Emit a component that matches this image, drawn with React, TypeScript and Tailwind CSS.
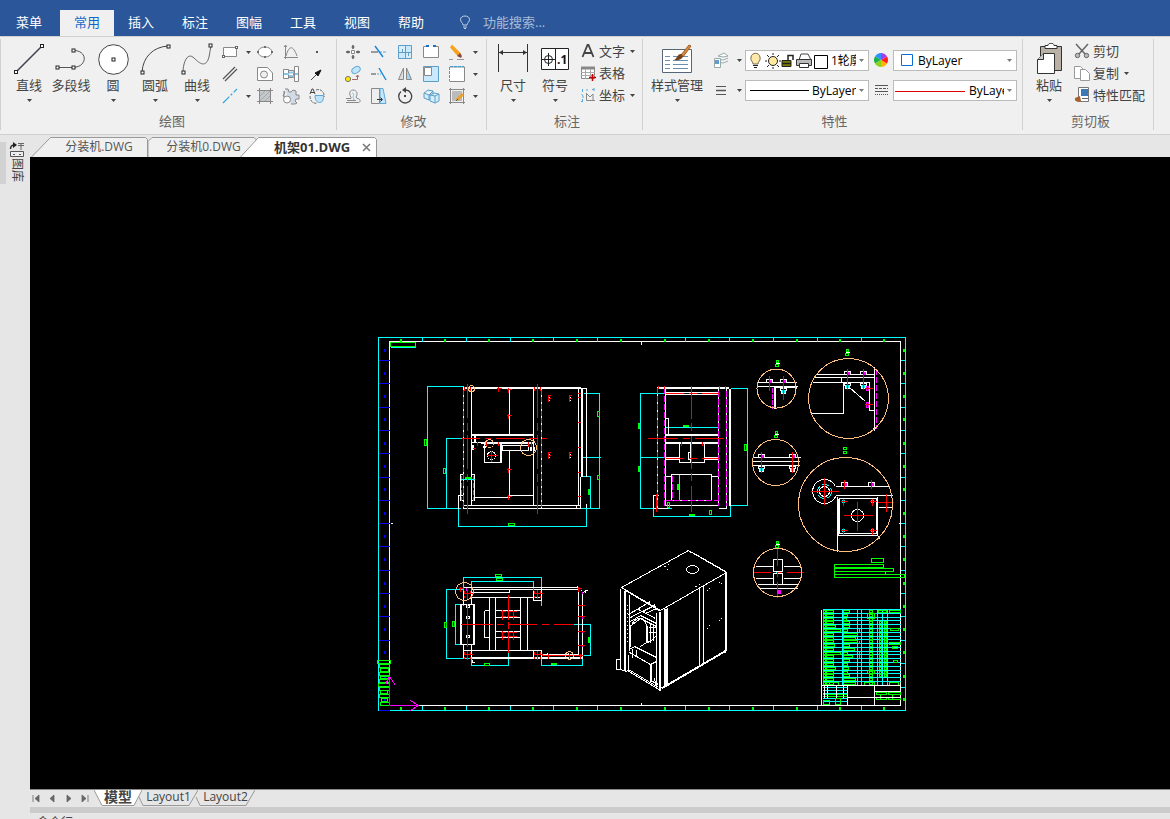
import { useState, type ReactNode } from "react";

const MENUS = ["菜单", "常用", "插入", "标注", "图幅", "工具", "视图", "帮助"];

const WHITE = "#ffffff";
const CYAN = "#00ffff";
const GREEN = "#00ff00";
const RED = "#ff0000";
const MAGENTA = "#ff00ff";
const BLUE = "#0000ff";
const ORANGE = "#ffbf7f";

function Arrow({ className = "" }: { className?: string }) {
  return (
    <svg width="5" height="3" viewBox="0 0 5 3" className={className} aria-hidden="true">
      <path d="M0 0h5L2.5 3z" fill="#444" />
    </svg>
  );
}

function Group({ label, className, children }: { label: string; className: string; children: ReactNode }) {
  return (
    <section className={`mt-0.5 mb-1 flex flex-none flex-col border-r border-[#d0d0d0] pt-0.5 ${className}`}>
      <div className="flex h-[66px]">{children}</div>
      <h2 className="mt-[5px] text-center text-[13px] leading-[18px] text-[#666]">{label}</h2>
    </section>
  );
}

function BigButton({ label, arrow = true, wide = false, children }: { label: string; arrow?: boolean; wide?: boolean; children: ReactNode }) {
  return (
    <button className={`flex flex-col items-center ${wide ? "w-[60px]" : "w-[42px]"}`}>
      <span className="flex h-9 items-center justify-center">{children}</span>
      <span className="text-[13px] leading-4 whitespace-nowrap">{label}</span>
      {arrow && <Arrow className="mt-[6px]" />}
    </button>
  );
}

function IconButton({ label, arrow = false, children }: { label: string; arrow?: boolean; children: ReactNode }) {
  return (
    <button aria-label={label} className={`flex h-[22px] items-center ${arrow ? "w-[35px]" : "w-[26px]"}`}>
      <svg width="18" height="18" viewBox="0 0 18 18" fill="none" stroke="#888" className="mx-[3px] flex-none">
        {children}
      </svg>
      {arrow && <Arrow className="ml-1 flex-none" />}
    </button>
  );
}

function TextButton({ label, arrow = false, children }: { label: string; arrow?: boolean; children: ReactNode }) {
  return (
    <button className="flex h-[22px] items-center pb-0.5 text-[13px] leading-[18px] whitespace-nowrap">
      <svg width="16" height="16" viewBox="0 0 16 16" fill="none" stroke="#666" className="mr-[3px] flex-none">
        {children}
      </svg>
      {label}
      {arrow && <Arrow className="ml-[5px]" />}
    </button>
  );
}

function Handle({ x, y, color = "#222" }: { x: number; y: number; color?: string }) {
  return <rect x={x - 1.5} y={y - 1.5} width="3" height="3" fill="#fff" stroke={color} />;
}

function DrawGroup() {
  return (
    <Group label="绘图" className="w-[337px] border-l pl-[7px]">
      <BigButton label="直线">
        <svg width="32" height="32" viewBox="0 0 32 32" fill="none" stroke="#445" strokeWidth="1.6">
          <path d="M3 29L29 3" />
          <g strokeWidth="1"><Handle x={3} y={29} /><Handle x={29} y={3} /></g>
        </svg>
      </BigButton>
      <BigButton label="多段线" arrow={false}>
        <svg width="32" height="32" viewBox="0 0 32 32" fill="none" stroke="#555">
          <path d="M2 24.5H18C33 24 33 7 18 7.5" />
          <Handle x={2.5} y={24.5} /><Handle x={18.5} y={24.5} /><Handle x={18.5} y={7.5} />
        </svg>
      </BigButton>
      <BigButton label="圆">
        <svg width="32" height="32" viewBox="0 0 32 32" fill="#fff" stroke="#444">
          <circle cx="16.5" cy="16.5" r="14.8" />
          <Handle x={16.5} y={16.5} />
        </svg>
      </BigButton>
      <BigButton label="圆弧">
        <svg width="32" height="32" viewBox="0 0 32 32" fill="none" stroke="#444">
          <path d="M3 29C4 14 14 4 29 3" />
          <Handle x={3.5} y={29.5} /><Handle x={29.5} y={3.5} />
        </svg>
      </BigButton>
      <BigButton label="曲线">
        <svg width="32" height="32" viewBox="0 0 32 32" fill="none" stroke="#666">
          <path d="M2 30C2 18 7 9 13 15S25 25 28 14Q29 9 30 2" />
          <Handle x={2.5} y={29.5} /><Handle x={29.5} y={2.5} />
        </svg>
      </BigButton>
      <div>
        <IconButton label="矩形" arrow>
          <path d="M2.5 4.5h13v9h-13z" fill="#fff" />
          <rect x="1.5" y="12.5" width="2" height="2" fill="#fff" stroke="#666" />
          <rect x="14.5" y="3.5" width="2" height="2" fill="#fff" stroke="#666" />
        </IconButton>
        <IconButton label="平行线">
          <path d="M2 14L14 2M4 16L16 4" stroke="#555" strokeWidth="1.2" />
        </IconButton>
        <IconButton label="中心线" arrow>
          <path d="M2 16L16 2" stroke="#35a7e0" strokeWidth="1.3" strokeDasharray="9 2 2 2" />
        </IconButton>
      </div>
      <div>
        <IconButton label="椭圆">
          <ellipse cx="9" cy="9" rx="7" ry="5" fill="#fff" />
          <path d="M8 4h2M8 14h2M1 9h2M15 9h2" stroke="#555" strokeWidth="1.6" />
        </IconButton>
        <IconButton label="轮廓">
          <path d="M1.5 2.5h10l5 5.5v7.5h-15z" fill="#fff" />
          <circle cx="8" cy="9.5" r="3.5" fill="#eee" />
        </IconButton>
        <IconButton label="填充">
          <path d="M3 3h12v12H3z" fill="#c3c8cb" stroke="none" />
          <path d="M1 3.5h16M1 14.5h16M3.5 1v16M14.5 1v16" stroke="#888" />
          <path d="M4 14L14 4M4 9l5-5M9 14l5-5" stroke="#a5a9ac" />
        </IconButton>
      </div>
      <div>
        <IconButton label="公式曲线">
          <path d="M3.5 2v14M2 14.5h14M2 4l1.5-2L5 4M4 13C7 2 11 2 15 13" />
        </IconButton>
        <IconButton label="孔轴">
          <path d="M1.5 4.5h5v9h-5zM6.5 5.5h5v7h-5zM12.5 1.5h4v15h-4z" fill="#fff" />
          <path d="M2 9h5M7 7.5h5M7 11h5M13 9h3" stroke="#8cc4e8" strokeWidth="2" />
        </IconButton>
        <IconButton label="齿轮">
          <path d="M3 2h3l1 3 2 0 2-2 3 1v3l0 1h3v4h-3l-1 2 2 2-2 1h-4M2 10l-1-2 2-2-1-2z" fill="#d3dbe6" />
          <circle cx="5" cy="12.5" r="3.5" fill="#fff" />
        </IconButton>
      </div>
      <div>
        <IconButton label="点">
          <path d="M8 9h2" stroke="#555" strokeWidth="2" />
        </IconButton>
        <IconButton label="箭头">
          <path d="M3 15L9 9" stroke="#444" />
          <path d="M13 5L7 8l3 3z" fill="#111" stroke="#111" />
        </IconButton>
        <IconButton label="局部放大">
          <path d="M8 3c5-2 9 3 8 7M2 9c0 5 3 8 7 7" strokeDasharray="3 1" stroke="#666" />
          <path d="M7 8.5h8.5c0 5-1 7-4 7s-4.500-3-4.500-7z" fill="#bfe3fa" stroke="#5ba6d3" />
          <path d="M2 7l2-5h1l2 5M3 5.500h3" stroke="#444" />
        </IconButton>
      </div>
    </Group>
  );
}

function ModifyGroup() {
  return (
    <Group label="修改" className="w-[150px] pl-1">
      <div>
        <IconButton label="平移">
          <path d="M9 2v4M9 12v4M2 9h4M12 9h4" stroke="#555" strokeWidth="1.4" />
          <path d="M7.500 4h3M7.500 14h3M4 7.500v3M14 7.500v3" stroke="#555" />
          <path d="M7.5 7.5h3v3h-3z" fill="#fff" />
        </IconButton>
        <IconButton label="平移复制">
          <ellipse cx="12" cy="5" rx="4.500" ry="3" transform="rotate(-30 12 5)" fill="#bfe6fb" stroke="#63a8d3" />
          <circle cx="4" cy="14" r="2.600" fill="#ffe800" stroke="#777" />
          <path d="M8 14.500h5.500v-4M12 12l1.500-2 1.500 2" stroke="#a66" />
        </IconButton>
        <IconButton label="等距线">
          <path d="M2 11.500h5v-1C4 5 7 3 9 3s6 2 3 7l1 1.500c4 0 4 4 1 4H2M3 13.500h9" />
          <path d="M8 6c3 0 1 3 1 4l1 3" stroke="#8cc0e0" />
        </IconButton>
      </div>
      <div>
        <IconButton label="裁剪">
          <path d="M1 9h7" stroke="#777" strokeWidth="1.400" />
          <path d="M9 9h8" stroke="#58a9e0" strokeDasharray="3 1" />
          <path d="M5 3l8 11" stroke="#1687d9" strokeWidth="1.400" />
        </IconButton>
        <IconButton label="延伸">
          <path d="M1 9h5" stroke="#777" strokeWidth="1.400" />
          <path d="M7 9h4" stroke="#58a9e0" strokeDasharray="2 1" />
          <path d="M9 3l7 12" stroke="#1687d9" strokeWidth="1.400" />
        </IconButton>
        <IconButton label="拉伸">
          <path d="M10 1.500h3l3 15h-6z" fill="#c3e7fb" stroke="#63a8d3" />
          <path d="M1.500 1.500h8v15h-8z" fill="#eee" />
          <path d="M7 12.500h5M10.500 10.500l2 2-2 2" stroke="#333" />
        </IconButton>
      </div>
      <div>
        <IconButton label="阵列">
          <path d="M2.500 2.500h13v13h-13z" fill="#c8eafc" stroke="#5d9fc8" />
          <path d="M9.500 3v12M3 9.500h12" stroke="#5d9fc8" />
          <path d="M3 3h6v6H3zM10 10h5v5h-5z" fill="#d9edf8" stroke="none" />
          <path d="M6.500 6v3M12.500 10v3" stroke="#5d9fc8" />
        </IconButton>
        <IconButton label="镜像">
          <path d="M7.500 3v11.500h-5z" fill="#ddd" />
          <path d="M10.500 3v11.500h5z" fill="#9fd5f3" />
        </IconButton>
        <IconButton label="旋转">
          <path d="M5 4.500a6.500 6.500 0 1 0 5-1.500" stroke="#444" strokeWidth="1.300" />
          <path d="M10 0v6L6 3z" fill="#444" stroke="none" />
          <path d="M8 9h2" stroke="#444" strokeWidth="2" />
        </IconButton>
      </div>
      <div>
        <IconButton label="打断">
          <path d="M4 3.500H1.500v11h15v-11H14" fill="#fff" />
          <path d="M4 3h3M11 3h3" stroke="#1673c9" strokeWidth="2" />
        </IconButton>
        <IconButton label="缩放">
          <path d="M1.500 1.500h15v15h-15z" fill="#c8eafc" stroke="#5d9fc8" />
          <path d="M2.500 2.500h7v8h-7z" fill="#fff" />
        </IconButton>
        <IconButton label="分解">
          <path d="M2 6l4-3 5 1v7l-4 2-5-2zM2 6l5 2 4-4M7 8v5" fill="#d3edfb" stroke="#5d9fc8" />
          <path d="M8 8l4-2 5 1v7l-4 2-5-2zM8 8l5 1 4-2M13 9v7" fill="#d3edfb" stroke="#5d9fc8" />
        </IconButton>
      </div>
      <div>
        <IconButton label="删除" arrow>
          <path d="M4 1.500l9 9-3 3-8-9z" fill="#f5a31f" stroke="none" />
          <path d="M12 10l2 3-1 2-4-2z" fill="#8a4a40" stroke="none" />
          <path d="M1 16.500h4M9 16.500h7" stroke="#999" />
        </IconButton>
        <IconButton label="过渡" arrow>
          <path d="M2 2h14.500v14.500H1.500" fill="#fff" />
          <path d="M1.500 2v14M2 1.500h14" stroke="#3f9dda" strokeDasharray="3 1" />
        </IconButton>
        <IconButton label="编辑填充" arrow>
          <path d="M4 4h10v10H4z" fill="#bbb" stroke="none" />
          <path d="M1 2.500h16M1 15.500h16M2.500 1v16M15.500 1v16" stroke="#888" />
          <path d="M9 13l6-6" stroke="#e9a22b" strokeWidth="3" />
          <path d="M8 14l2-2" stroke="#555" />
        </IconButton>
      </div>
    </Group>
  );
}

function AnnotateGroup() {
  return (
    <Group label="标注" className="w-[156px] pl-[5px]">
      <BigButton label="尺寸">
        <svg width="32" height="32" viewBox="0 0 32 32" fill="none" stroke="#333">
          <path d="M1.5 1v28M30.5 1v28M2 9.5h28" />
          <path d="M2 9.5l4-2.500v5zM30 9.5L26 7v5z" fill="#333" stroke="none" />
        </svg>
      </BigButton>
      <BigButton label="符号">
        <svg width="30" height="24" viewBox="0 0 30 24" fill="none" stroke="#222">
          <path d="M1.500 1.500h27v21h-27zM15.500 1.500v21" fill="#fff" />
          <circle cx="8.500" cy="12.500" r="4" />
          <path d="M8.500 6v13M2 12.500h13" />
          <text x="17" y="17" fontSize="12" fontWeight="bold" fill="#111" stroke="none" fontFamily="Open Sans">.1</text>
        </svg>
      </BigButton>
      <div className="ml-1">
        <TextButton label="文字" arrow>
          <path d="M2.500 14L7.500 2h1l5 12M4.500 10h7" stroke="#444" strokeWidth="1.800" />
        </TextButton>
        <TextButton label="表格">
          <path d="M1.500 2.500h13v11h-13z" fill="#fff" stroke="#888" />
          <path d="M1 3h14" strokeWidth="3" stroke="#888" />
          <path d="M1 7.500h14M1 10.500h14M5.500 4v10M10.500 4v10" stroke="#aaa" />
          <path d="M12.500 9v7M9 12.500h7" stroke="#c00" strokeWidth="1.500" />
        </TextButton>
        <TextButton label="坐标" arrow>
          <path d="M6.500 6v7.500H15M6 6l4 4 3-3v6" stroke="#888" />
          <path d="M2.500 2v3M1 14.500h2M7 2v2M14 1v3M12 2.500h2M1.500 7l1.500 2v2M2.500 12v3" stroke="#5caae0" />
        </TextButton>
      </div>
    </Group>
  );
}

function Combo({ label, value, pad, children }: { label: string; value: string; pad: string; children?: ReactNode }) {
  return (
    <div className="flex h-[21px] w-[124px] items-center border border-[#bbb] bg-white text-black">
      {children}
      <select aria-label={label} className={`h-[19px] min-w-0 flex-1 appearance-none overflow-hidden text-[12px] leading-[18px] outline-none ${pad}`}>
        <option>{value}</option>
      </select>
      <Arrow className="mr-1 ml-[3px] flex-none opacity-70" />
    </div>
  );
}

function PropertyGroup() {
  return (
    <Group label="特性" className="w-[380px] pl-1">
      <BigButton label="样式管理" wide>
        <svg width="32" height="32" viewBox="0 0 32 32" fill="none" stroke="#6c8fb0">
          <path d="M1.500 6.500h29v23h-29z" fill="#fff" stroke="#567" />
          <path d="M4 13.500h5M4 17.500h5M4 21.500h5M4 25.500h5M12 13.500h15M12 17.500h15M12 21.500h15M12 25.500h15" />
          <path d="M20 12L28 2l2 1-8 11z" fill="#d98a3d" stroke="#a05c20" />
          <path d="M13 17c3-1 3-6 7-6 4 2 1 7-7 6z" fill="#74411a" stroke="none" />
        </svg>
      </BigButton>
      <div className="flex w-[38px] flex-col pt-2">
        <button aria-label="图层" className="flex h-[22px] items-center pl-[6px]">
          <svg width="16" height="16" viewBox="0 0 16 16" fill="#fff" stroke="#9aa" className="mr-2">
            <path d="M5 4l6-3 4 3-5 1zM5 7l5 1 5-2M6 10l4 1 5-2" />
            <path d="M1.500 6.500h6v9h-6z" />
            <path d="M2 8h4v4H2z" fill="#5f9dd0" stroke="none" />
          </svg>
          <Arrow />
        </button>
        <button aria-label="线宽" className="mt-2 flex h-[22px] items-center pl-[6px]">
          <svg width="16" height="16" viewBox="0 0 16 16" fill="none" stroke="#555" className="mr-2">
            <path d="M3 4.500h10M3 12.500h10" />
            <path d="M3 8.500h10" strokeWidth="1.500" />
          </svg>
          <Arrow />
        </button>
      </div>
      <div className="flex flex-col gap-[9px] pt-[9px]">
        <Combo label="图层列表" value="1轮廓实线层" pad="pl-px">
          <svg width="84" height="19" viewBox="0 0 84 19" fill="none" stroke="#222" className="flex-none">
            <path d="M7 13c0-3-3-3-2-7 1-5 8-5 9 0 1 4-2 4-2 7z" fill="#ffe9a8" stroke="#765" />
            <path d="M7 14.500h5M8 16.500h3" />
            <circle cx="27" cy="10" r="4.500" fill="#ffeaa0" />
            <path d="M27 2v2M27 16v2M19 10h2M33 10h2M21 4l2 2M33 4l-2 2M21 16l2-2M33 16l-2-2" />
            <path d="M36 9.500h9v6h-9z" fill="#7c7a00" stroke="#222" />
            <path d="M42 9V4.500h5V9M36 12.500h9" stroke="#222" strokeWidth="1.500" />
            <path d="M53 9l2-6h7l3 6z" fill="#fff" stroke="#444" />
            <path d="M50.500 8.500h15v6h-15z" fill="#bbb" stroke="#333" />
            <path d="M53.500 12.500h9v4h-9z" fill="#fff" stroke="#333" />
            <path d="M68.500 4.500h13v13h-13z" fill="#fff" stroke="#000" />
          </svg>
        </Combo>
        <Combo label="线型" value="ByLayer" pad="">
          <svg width="66" height="19" viewBox="0 0 66 19" stroke="#000" className="flex-none">
            <path d="M4 9.500h59" />
          </svg>
        </Combo>
      </div>
      <div className="flex w-6 flex-col items-center pt-2">
        <button aria-label="颜色" className="flex h-[22px] items-center">
          <svg width="14" height="14" viewBox="-7 -7 14 14">
            <path d="M0 0L0-7A7 7 0 0 0-6-3.500z" fill="#2a92ff" />
            <path d="M0 0L-6-3.500A7 7 0 0 0-6 3.500z" fill="#19b24a" />
            <path d="M0 0L-6 3.500A7 7 0 0 0 0 7z" fill="#8bd31b" />
            <path d="M0 0L0 7A7 7 0 0 0 6 3.500z" fill="#ffb400" />
            <path d="M0 0L6 3.500A7 7 0 0 0 6-3.500z" fill="#ff2020" />
            <path d="M0 0L6-3.500A7 7 0 0 0 0-7z" fill="#a63cf0" />
          </svg>
        </button>
        <button aria-label="线型管理" className="mt-2 flex h-[22px] items-center">
          <svg width="13" height="12" viewBox="0 0 13 12" fill="none" stroke="#555">
            <path d="M0 1.500h13M0 7.500h13" />
            <path d="M0 4.500h13" strokeDasharray="3 1" />
            <path d="M0 10.500h13" strokeDasharray="1 1" />
          </svg>
        </button>
      </div>
      <div className="flex flex-col gap-[9px] pt-[9px]">
        <Combo label="颜色列表" value="ByLayer" pad="pl-[5px]">
          <svg width="19" height="19" viewBox="0 0 19 19" className="flex-none">
            <path d="M7.500 3.500h11v11h-11z" fill="#fff" stroke="#0a6fd0" />
          </svg>
        </Combo>
        <Combo label="线宽列表" value="ByLayer" pad="">
          <svg width="75" height="19" viewBox="0 0 75 19" className="flex-none">
            <path d="M1 10.500h70" stroke="#d00" />
          </svg>
        </Combo>
      </div>
    </Group>
  );
}

function ClipboardGroup() {
  return (
    <Group label="剪切板" className="w-[131px] pl-[5px]">
      <BigButton label="粘贴">
        <svg width="26" height="32" viewBox="0 0 26 32" stroke="#333">
          <path d="M4.500 3.500h21v24h-21z" fill="#b9b0a6" />
          <path d="M9 5.500v-3h3c0-3 6-3 6 0h3v3z" fill="#fff" />
          <path d="M7.500 10.500h11v20h-17v-14z" fill="#fff" />
          <path d="M7.500 10.500v6h-6" fill="#ccc" />
        </svg>
      </BigButton>
      <div className="ml-1">
        <TextButton label="剪切">
          <path d="M2 1l9 10M14 1L5 11" stroke="#666" strokeWidth="1.500" />
          <circle cx="3.500" cy="12.500" r="2.200" fill="#bbb" />
          <circle cx="12.500" cy="12.500" r="2.200" fill="#bbb" />
        </TextButton>
        <TextButton label="复制" arrow>
          <path d="M.5 1.500h6l3 3v9h-9z" fill="#fff" stroke="#999" />
          <path d="M6.500 4.500h5l4 4v7h-9z" fill="#fff" stroke="#999" />
        </TextButton>
        <TextButton label="特性匹配">
          <path d="M4.500.5h10v14h-10z" fill="#fff" stroke="#777" />
          <path d="M7 2h7v7H7z" fill="#3d79b6" stroke="none" />
          <path d="M8 11.500h6" />
          <path d="M6 9L1 11c-1 3 3 5 6 3z" fill="#a8602c" stroke="none" />
        </TextButton>
      </div>
    </Group>
  );
}

const TICKS_X = [422, 466, 510, 553, 597, 685, 729, 773, 817, 861];
const MARKS_X = [400, 444, 488, 532, 576, 620, 664, 708, 752, 796, 839, 883];
const TICKS_Y = [360, 383, 407, 430, 453, 477, 500, 523, 546, 570, 593, 616, 640, 663, 687];
const MARKS_Y = [349, 372, 395, 418, 442, 465, 488, 512, 535, 558, 582, 605, 628, 651, 675, 698];

function SheetFrame() {
  return (
    <g>
      <path stroke={CYAN} d="M378 337H905V710H378zM390 347H415V342" />
      <path stroke={WHITE} d="M389 341H900V705H389zM641 341V344M641 702V705M390 523h2M898 523h2" />
      <path stroke={CYAN} d={TICKS_X.map((x) => `M${x} 337v4M${x} 705v5`).join("")} />
      <path stroke={BLUE} d={TICKS_Y.map((y) => `M378 ${y}h11`).join("") + "M378 710h11"} />
      <path stroke={CYAN} d={TICKS_Y.map((y) => `M900 ${y}h5`).join("")} />
      <g stroke="none" fill={GREEN}>
        {MARKS_X.map((x) => (
          <g key={x}>
            <rect x={x - 1} y={338} width="2" height="3" />
            <rect x={x - 1} y={706} width="2" height="3" />
          </g>
        ))}
        {MARKS_Y.map((y) => (
          <g key={y}>
            <rect x={902} y={y - 1} width="2" height="3" />
            <rect x={383} y={y - 1} width="2" height="3" fill={BLUE} />
          </g>
        ))}
      </g>
      <rect x="390" y="342" width="25" height="4" stroke={GREEN} />
      <path
        stroke={GREEN}
        d="M377 660h13v3h-13zM379 664h10v3h-10zM380 668h8v3h-8zM379 672h10v3h-10zM380 676h8v2h-8zM379 679h10v3h-10zM378 683h11v3h-11zM379 687h10v3h-10zM380 690h7v3h-7zM379 694h10v3h-10zM381 698h6v3h-6zM380 702h9v3h-9z"
      />
      <path stroke={MAGENTA} d="M389 705V676L385 684M389 676L395 685M389 705H418L410 700M418 705L410 710" />
    </g>
  );
}

function cross(x: number, y: number, r: number) {
  return `M${x - r} ${y}H${x + r + 1}M${x} ${y - r}V${y + r + 1}`;
}

function FrontView() {
  return (
    <g>
      <path stroke={CYAN} d="M463 386H427V508H460M461 438H446V508M458 508V526H586V505M583 393H599V508H580M580 457H600M580 476H590V508" />
      <path stroke={WHITE} d="M463 387H580M463 388H580M471 388V505M533 388V505M578 388V505M463 505H580V508H463zM541 505V508M576 505V508M458 508V495H463M586 503V507" />
      <path stroke={WHITE} d="M581 388V476M582 388V476M586 388V476M580 388H586M580 476V508M471 434H533M471 435H533M471 442H533M480 443H533M475 434V442M474 434V442" />
      <path stroke={WHITE} d="M484 443h17v19h-17zM500 443V462M502 445h26v5h-26zM509 389V434M509 450V495H533M473 497H509M460 474H463V500H460zM471 474H474V500H471" />
      <path stroke={WHITE} d="M463 386V508M541 386V508" />
      <path stroke={MAGENTA} strokeDasharray="5 2" d="M463 389V508M541 389V508M461 475V500M473 475V500" />
      <path stroke={CYAN} d="M460 479H474" />
      <circle cx="491" cy="455" r="4" stroke={WHITE} />
      <path stroke={RED} d={cross(491, 455, 5)} />
      <path stroke={RED} strokeDasharray="34 5 8 4" d="M467 383V513M537 383V513" />
      <path stroke={RED} strokeDasharray="18 5 6 5 29 4 8 5 16" d="M461 438H546" />
      <path
        stroke={RED}
        d={[[508, 389], [508, 415], [508, 469], [508, 496], [498, 388]].map(([x, y]) => cross(x, y, 2)).join("") + "M577 393h3M577 397h3M577 422h3M577 447h3M577 472h3M577 496h3M464 386v4M470 386v4M534 386v4M540 386v4"}
      />
      {[[548, 397], [569, 397], [548, 454], [569, 454]].map(([x, y]) => (
        <g key={`${x}-${y}`}>
          <path stroke={WHITE} d={`M${x + 1} ${y - 1}v1M${x + 1} ${y + 2}v1`} />
          <path stroke={RED} d={`M${x} ${y - 3}v3M${x} ${y + 1}v3M${x - 1} ${y - 2}h3M${x - 1} ${y + 1}h3`} />
        </g>
      ))}
      <path stroke={WHITE} d="M472 444v5M482 446h3M530 446v4M533 446v4" strokeWidth="2" />
      <path stroke={RED} d="M477 441v4M486 441v4M498 441v4M528 441v5M531 441v5M472 448h3" />
      <circle cx="528" cy="447" r="8" stroke={ORANGE} />
      <circle cx="489" cy="443" r="4" stroke={ORANGE} />
      <circle cx="471" cy="388" r="3" stroke={ORANGE} />
      <path stroke={GREEN} d="M424 439h2v6h-2zM443 468h2v5h-2zM508 523h6v2h-6zM597 411h2v5h-2zM597 475h2v4h-2zM588 489h1v5h-1zM465 477h6v1h-6z" />
    </g>
  );
}

function SideView() {
  return (
    <g>
      <path stroke={CYAN} d="M665 393H640V508H671M640 457H665M665 427H718V410M730 388H747V505H730M653 497V516H730V503M679 474V500M665 410V427" />
      <path stroke={WHITE} d="M657 387H728M657 388H728M665 392H718M665 394H718M665 388V505M718 388V505M726 388V508H718M665 505H718M657 508H667M729 388V505M730 388V505" />
      <path stroke={WHITE} d="M665 418H668V434M665 434H718M665 435H718M665 442H718M665 443H718M679 443h25v19h-25zM690 443V462M665 457H679M665 459H679M704 457H718M704 459H718M688 452h3v7h-3z" />
      <path stroke={WHITE} d="M671 474H711V500H671zM665 476H671M711 476H718M657 508H653V495H658M657 386V508M718 424V468" />
      <path stroke={MAGENTA} strokeDasharray="6 2" d="M657 387V508M664 387V505M718 390V505M726 390V505M672 475V500M665 500H718" />
      <path stroke={RED} strokeDasharray="33 4 8 5" d="M691 385V511" />
      <path stroke={RED} strokeDasharray="30 5 7 5" d="M647 438H723" />
      <path stroke={RED} strokeDasharray="18 5 8 5" d="M665 393H721M665 458H721" />
      <path stroke={RED} d="M656 493V511M658 385v3M664 385v3M719 385v3M725 385v3M681 441v4M702 441v4M691 441v2" />
      <path stroke={GREEN} d="M638 423h1v5h-1zM638 466h1v5h-1zM683 425h5v1h-5zM744 444h2v6h-2zM689 514h5v1h-5zM677 484h1v5h-1zM667 502h2v5h-2zM709 510h2v4h-2z" />
    </g>
  );
}

function Bolt({ x, y, nut }: { x: number; y: number; nut?: number }) {
  return (
    <g>
      <path stroke={WHITE} d={`M${x - 3} ${y + 3}v-3h6v3`} />
      <rect x={x - 1} y={y} width="3" height="3" fill={MAGENTA} stroke="none" />
      {nut && (
        <>
          <path stroke={WHITE} d={`M${x - 3} ${nut}h6v2h-6zM${x - 2} ${nut + 2}v3h4v-3`} />
          <path stroke={CYAN} d={`M${x - 1} ${nut + 1}v3M${x + 1} ${nut + 1}v3`} />
        </>
      )}
      <path stroke={RED} d={`M${x} ${y - 3}V${nut ? nut + 6 : y + 6}`} />
    </g>
  );
}

function ViewLabel({ x, y }: { x: number; y: number }) {
  return (
    <g>
      <path stroke={GREEN} d={`M${x - 1} ${y}h2v2h-2zM${x - 2} ${y + 4}h3v2h-3z`} />
      <path stroke={WHITE} d={`M${x - 2} ${y + 3}h4`} />
    </g>
  );
}

function Details() {
  return (
    <g>
      <ViewLabel x={777} y={360} />
      <path stroke={WHITE} d="M757 382H796M757 386H797M773 387H796M774 386V408M775 386V408" />
      <path stroke={MAGENTA} strokeDasharray="5 1" d="M772 387V408" />
      <Bolt x={769} y={379} />
      <Bolt x={783} y={379} nut={388} />
      <path stroke={RED} d="M769 375V390M783 375V399" />
      <circle cx="776" cy="388" r="19.500" stroke={ORANGE} />

      <ViewLabel x={847} y={349} />
      <path stroke={WHITE} d="M816 374H874M813 377H874M812 382H869V410H874M841 377V382M843 382V413H811M874 366V430M872 428h3M849 387L865 401" />
      <path stroke={MAGENTA} strokeDasharray="6 2" d="M876 368V428" />
      <Bolt x={847} y={371} nut={383} />
      <Bolt x={863} y={371} nut={383} />
      <path stroke={MAGENTA} d="M866 386h2v4h-2zM866 402h2v5h-2z" />
      <path stroke={RED} d="M864 388H872M864 404H872" />
      <circle cx="848" cy="398" r="40" stroke={ORANGE} />

      <ViewLabel x={776} y={431} />
      <path stroke={WHITE} d="M752 457H800M752 461H799M752 465H799" />
      <Bolt x={761} y={454} nut={466} />
      <Bolt x={792} y={454} nut={466} />
      <circle cx="775" cy="462" r="23" stroke={ORANGE} />

      <path stroke={GREEN} d="M843 447h3v2h-3zM843 451h3v2h-3z" />
      <path stroke={WHITE} d="M835 486H888M835 495H892M835 486A12 12 0 1 0 833 499L836 495M837 496V551M877 496V535H837M839 498h37v35h-37zM838 498V535M878 507H892M877 535L880 539" />
      <circle cx="824" cy="491" r="5" stroke={WHITE} />
      <circle cx="824" cy="491" r="7" stroke={CYAN} strokeDasharray="8 2" />
      <circle cx="857" cy="515" r="6" stroke={WHITE} />
      {[[843, 501], [872, 501], [843, 530], [872, 530]].map(([x, y]) => (
        <g key={`${x}-${y}`}>
          <path stroke={CYAN} d={`M${x - 1} ${y - 1}h2v2h-2z`} />
          <path stroke={RED} d={cross(x, y, 3)} />
        </g>
      ))}
      <Bolt x={844} y={482} />
      <Bolt x={871} y={482} />
      <path stroke={RED} d="M810 491H838M824 477V504M843 515H872M857 501V530M877 502H893M886 493V511" />
      <circle cx="845" cy="504" r="47" stroke={ORANGE} />

      <ViewLabel x={777} y={541} />
      <path stroke={WHITE} d="M755 566H773M783 566H800M755 578H773M783 578H800M757 584H798M758 588H797M773 559h9v12h-9zM773 573h9v11h-9z" />
      <path stroke={CYAN} d="M775 572h5" />
      <path stroke={RED} strokeDasharray="17 6 5 5" d="M753 572H803M777 548V597" />
      <rect x="776" y="589" width="4" height="4" fill={MAGENTA} stroke="none" />
      <circle cx="777" cy="572" r="24" stroke={ORANGE} />
      <path stroke={GREEN} d="M871 558h12v4h-12zM834 564h49v3h-49zM834 568h59v3h-59zM834 571h51v3h-51zM834 574h70v3h-70z" />
    </g>
  );
}

function TopView() {
  return (
    <g>
      <path stroke={CYAN} d="M463 589H446V658H471M463 604H455V644H463M463 605V577H541V605M471 604V581H533V600M471 658V665H508V640M541 658V665H582V658M573 624H590V655H580" />
      <path stroke={WHITE} d="M463 587H578M471 589H578M471 592H509V589M471 597H541M578 590V655M582 592V658M463 650H541M471 657H581M471 658H581M541 654H578M541 655H578" />
      <path stroke={WHITE} d="M460 604H474V644H460zM461 604V644M473 604V644M471 590V604M471 644V657M463 590V604M463 644V657M489 597V650M495 597V650M520 597V650M527 597V650M484 610H489M484 610V637H489" />
      <path stroke={WHITE} d="M495 610H520M495 617H520M495 631H520M495 637H520M533 590V600H541V587M533 650V658M541 650V658M472 659v3h2M466 605h3v2h-3zM466 616h3v2h-3zM466 635h3v2h-3zM582 593l3-3M585 592v-2h2" />
      <path stroke={MAGENTA} d="M582 591v2M582 616v2M582 630v2M582 644v2M466 587v3M533 587v3" />
      <path stroke={RED} strokeDasharray="32 4 7 5 28 5 7 5" d="M460 624H573" />
      <path stroke={RED} strokeDasharray="22 5 7 5" d="M508 594V652" />
      <path stroke={RED} d="M467 603V646M577 605h7M577 616h7M577 631h7M577 645h7M541 655H583" />
      <path
        stroke={RED}
        d={[[467, 593], [537, 593], [467, 654], [537, 654]].map(([x, y]) => cross(x, y, 4) + `M${x - 3} ${y - 3}v2M${x + 3} ${y - 3}v2M${x - 3} ${y + 2}v2M${x + 3} ${y + 2}v2`).join("")}
      />
      <path
        stroke={RED}
        d={[[502, 611], [508, 611], [513, 611], [502, 616], [508, 616], [513, 616], [502, 632], [508, 632], [513, 632], [502, 636], [508, 636], [513, 636], [460, 588], [578, 588], [548, 655], [569, 655], [580, 655]].map(([x, y]) => cross(x, y, 2)).join("")}
      />
      <path stroke={WHITE} d="M547 652v2M549 656v2M568 652v2M571 656v2M576 586h1M580 590h1" />
      <circle cx="464" cy="591" r="9" stroke={ORANGE} />
      <circle cx="569" cy="655" r="4" stroke={ORANGE} />
      <path stroke={GREEN} d="M495 574h6v2h-6zM496 578h6v2h-6zM444 622h2v5h-2zM452 621h2v5h-2zM588 637h1v5h-1zM484 663h5v2h-5zM551 663h5v1h-5z" />
    </g>
  );
}

function IsoView() {
  return (
    <g stroke={WHITE}>
      <path d="M621 587L688 550L726 572L660 610zM690 550v2M692 552L725 571M625 590L660 611" />
      <path d="M725 572V652M726 572V650M725 650L660 688M725 651L662 688M699 588V665M703 585V663M656 612V687M659 611V690M660 611V690M664 608V686M665 608V686M666 608V685M667 607V685" />
      <path d="M620 588V669M624 590V670M625 590V671M629 594V650M620 669L627 671M616 659h4v10h-4zM627 670L660 690M628 669L658 687" />
      <path d="M628 614L650 601M630 617L655 604M630 621L640 615L656 623M632 624L640 618L656 626M643 611L654 605L656 607M645 613L656 608M638 609L655 618" />
      <path d="M630 624V646M631 626C633 617 644 614 646 625V642L640 646M647 625V642M650 622V642M653 625V640M646 642L650 641L656 635M648 627h8M648 632h8" />
      <path d="M629 649L634 646L656 657M632 648V657M636 649V655M629 652L650 664L656 661M650 664V681M651 664V681M628 654V670M652 681L658 684M654 678L656 688" />
      <ellipse cx="692" cy="569" rx="6" ry="4" />
      <path strokeDasharray="1 3" d="M664 566l6-3M667 568v1M695 586l6-3M627 604v38M632 611l12-7M707 589v1M709 587v3M719 581v4M721 582v2M707 627v2M709 624v3M719 619v3M721 617v4" />
    </g>
  );
}

const PART_NAMES = [7, 7, 7, 7, 9, 14, 7, 7, 7, 8, 7, 14, 7, 7, 7, 9, 7, 7, 7, 7];
const PART_SPECS = [6, 4, 3, 6, 6, 4, 14, 12, 14, 6, 11, 4, 9, 6, 4, 5, 4, 6, 12, 12];

function PartsTable() {
  const rows = PART_NAMES.map((w, i) => ({ w, s: PART_SPECS[i], y: 610 + Math.round(i * 3.79) }));
  return (
    <g>
      <path stroke={CYAN} d={rows.map(({ y }) => `M822 ${y - 1}H900`).join("") + "M842 609V685M843 609V685M861 609V685M877 609V685M882 609V685M887 609V685M857 609V685"} />
      <path
        stroke={GREEN}
        d={rows.map(({ w, s, y }, i) => `M823 ${y}h2v2h-2zM826 ${y}h${w}v2h-${w}zM843 ${y}h${s}v2h-${s}zM869 ${y}h3v2h-3z` + (i > 2 && i < 18 ? `M879 ${y}h2v2h-2zM884 ${y}h2v2h-2z` : "")).join("")}
      />
      <path stroke={GREEN} d="M889 610h11v2h-11zM890 628h8v2h-8zM889 642h11v2h-11zM892 646h5v2h-5zM893 660h4v2h-4zM878 610h8v2h-8zM867 613h7v5h-7zM867 670h7v3h-7zM829 682h9v3h-9zM864 682h10v3h-10zM889 682h9v3h-9zM859 628v3M859 640v3M859 651v6" />
      <path stroke={CYAN} d="M822 687H847M822 690H847M822 693H847M822 698H847M822 701H847" />
      <path stroke={GREEN} d="M822 694H847M822 696H847M823 700h6v4h-6zM835 698h5v6h-5zM823 704H828M876 692h10v2h-10zM888 692h12v2h-12zM876 697h10v2h-10zM888 697h12v2h-12zM880 694V698M892 694V698" />
      <path stroke={WHITE} d="M821 609V705M821 685H900M847 685V705M874 685V705M847 697H900M874 691H900M824 685V697M827 685V697M836 685V697M843 685V697" />
    </g>
  );
}

function DrawingCanvas() {
  return (
    <svg role="img" aria-label="机架01.DWG" viewBox="30 157 1140 632" className="block h-full w-full" fill="none" strokeWidth="1" shapeRendering="crispEdges">
      <g transform="translate(.5 .5)">
        <SheetFrame />
        <FrontView />
        <SideView />
        <TopView />
        <IsoView />
        <Details />
        <PartsTable />
      </g>
    </svg>
  );
}

function DocumentTabs() {
  return (
    <div className="flex h-[22px] items-end pl-px text-[12px] leading-[18px] text-[#555]">
      <button className="relative h-5 w-[117px] pl-[19px] text-center">
        <svg width="117" height="20" viewBox="0 0 117 20" className="absolute inset-0" fill="#f0f0f0" stroke="#999">
          <path d="M.5 20L19.500.5h95l2 2V20" />
        </svg>
        <span className="relative">分装机.DWG</span>
      </button>
      <button className="relative h-5 w-[109px] pl-0.5 text-center">
        <svg width="109" height="20" viewBox="0 0 109 20" className="absolute inset-0" fill="#f0f0f0" stroke="#999">
          <path d="M0 20V4.500l4-4h102l2 2V20" />
        </svg>
        <span className="relative">分装机0.DWG</span>
      </button>
      <div className="relative -ml-[17px] flex h-5 w-[137px] items-center pl-[34px] text-[#333]">
        <svg width="137" height="20" viewBox="0 0 137 20" className="absolute inset-0" fill="#fff" stroke="#999">
          <path d="M.5 20L18.500.5h116l2 2V20" />
        </svg>
        <button className="relative text-[13px] font-bold">机架01.DWG</button>
        <button aria-label="关闭" className="relative ml-auto pr-[6px]">
          <svg width="9" height="9" viewBox="0 0 9 9" stroke="#777" strokeWidth="1.500">
            <path d="M1 1l7 7M8 1L1 8" />
          </svg>
        </button>
      </div>
    </div>
  );
}

function LayoutTabs() {
  return (
    <div className="flex h-[17px] flex-none items-center border-t border-[#888] bg-[#e6e6e6] pr-2 text-[12px] leading-[14px] text-[#444]">
      {["M1 1v7M7 1v7L3 4.500z", "M6 1v7L2 4.500z", "M3 1v7l4-3.500z", "M2 1v7l4-3.500zM8 1v7"].map((d, i) => (
        <button key={d} aria-label={["首页", "上一页", "下一页", "末页"][i]} className="flex w-4 justify-start pl-[2px]">
          <svg width="9" height="9" viewBox="0 0 9 9" fill="#666" stroke="#666" strokeWidth=".8">
            <path d={d} />
          </svg>
        </button>
      ))}
      <button className="relative h-4 w-12 pb-0.5 text-[14px] font-bold">
        <svg width="48" height="16" viewBox="0 0 48 16" className="absolute inset-0" fill="#fff" stroke="#999">
          <path d="M0 0l8 15.500h32L48 0" />
        </svg>
        <span className="relative">模型</span>
      </button>
      {["Layout1", "Layout2"].map((name) => (
        <button key={name} className="relative h-4 w-[57px] pr-1 pb-0.5">
          <svg width="60" height="16" viewBox="0 0 60 16" className="absolute top-0 -left-1" fill="none" stroke="#999">
            <path d="M1 7l4 8.500h46L60 0" />
          </svg>
          <span className="relative">{name}</span>
        </button>
      ))}
    </div>
  );
}

export default function App() {
  const [menu, setMenu] = useState("常用");

  return (
    <div className="flex h-screen flex-col overflow-hidden bg-[#e6e6e6] font-['Open_Sans','Noto_Sans_CJK_SC',sans-serif] text-[#444]">
      <header className="flex h-9 flex-none items-end bg-[#2b579a] text-[13px] leading-[18px] text-white">
        <nav className="flex">
          {MENUS.map((name) => (
            <button
              key={name}
              onClick={() => setMenu(name)}
              className={`h-[26px] w-[54px] pb-0.5 first:w-[60px] first:pr-0.5 ${menu === name ? "bg-[#f0f0f0] text-[#1068c9]" : ""}`}
            >
              {name}
            </button>
          ))}
        </nav>
        <label className="ml-[21px] flex h-[26px] items-center pb-0.5">
          <svg width="12" height="14" viewBox="0 0 12 14" fill="none" stroke="#c3cfe2" className="mr-3">
            <path d="M4 10C4 8 1.500 7 1.500 4.500S4 1 6 1s4.500 1 4.500 3.500S8 8 8 10zM4 12h4M5 13.500h2" />
          </svg>
          <input aria-label="功能搜索" placeholder="功能搜索..." className="w-40 outline-none placeholder:text-[#a9bbd7]" />
        </label>
      </header>

      <div className="flex h-[99px] flex-none border-y border-[#d0d0d0] bg-[#f0f0f0]">
        <DrawGroup />
        <ModifyGroup />
        <AnnotateGroup />
        <PropertyGroup />
        <ClipboardGroup />
      </div>

      <div className="flex min-h-0 flex-1">
        <aside className="flex w-[30px] flex-none items-start pt-[7px]">
          <div className="h-[42px] w-[6px] bg-[#d2d2d2]" />
          <button className="ml-[3px] flex flex-col items-center text-[12px] leading-4">
            <svg width="16" height="16" viewBox="0 0 16 16" fill="none" stroke="#333">
              <path d="M1.500 7c0-3 1-4 4-4" strokeWidth="1.500" />
              <path d="M4 0l4 3-4 3z" fill="#222" stroke="none" />
              <path d="M9 1.500h6M12 2v6M9 3.500h6" stroke="#666" />
              <path d="M1.500 9.500h13v5h-13zM4 12.500h2M10 12.500h2" fill="#eee" stroke="#555" />
            </svg>
            <span className="[text-orientation:sideways] [writing-mode:vertical-rl]">图库</span>
          </button>
        </aside>
        <main className="flex min-w-0 flex-1 flex-col">
          <DocumentTabs />
          <div className="min-h-0 flex-1 bg-black">
            <DrawingCanvas />
          </div>
          <LayoutTabs />
          <div className="mt-px h-[6px] flex-none bg-[#cbcbcb]" />
          <p className="h-[6px] flex-none pl-[7px] text-[12px] leading-5">命令行:</p>
        </main>
      </div>
    </div>
  );
}
